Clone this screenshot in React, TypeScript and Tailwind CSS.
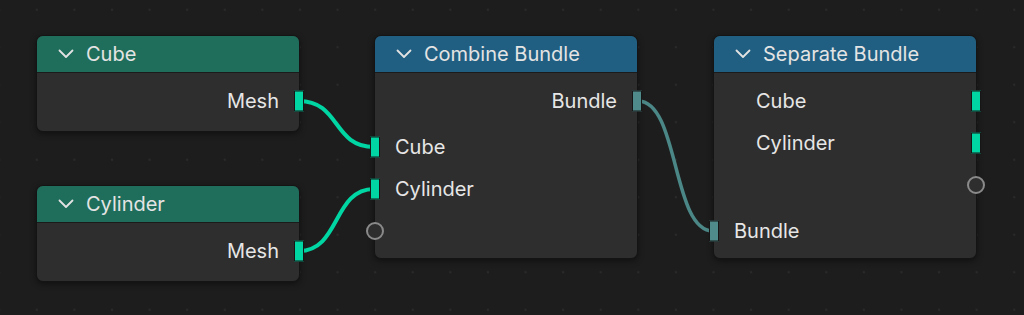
import React from 'react';

type Socket = 'geo' | 'bundle' | 'empty';

type Row = {
  label?: string;
  side: 'in' | 'out';
  socket: Socket;
  indent?: boolean;
  gapBefore?: boolean;
};

type NodeProps = {
  title: string;
  tone: 'green' | 'blue';
  left: string;
  top: string;
  rows: Row[];
  bottomPad: string;
};

const SocketShape: React.FC<{ kind: Socket; side: 'in' | 'out' }> = ({ kind, side }) => {
  const pos = side === 'out' ? '-right-[5px]' : '-left-[5px]';
  if (kind === 'empty') {
    const cpos = side === 'out' ? '-right-[9px]' : '-left-[9px]';
    return (
      <span
        className={`absolute ${cpos} top-1/2 -translate-y-1/2 w-[18px] h-[18px] rounded-full border-2 border-[#8a8a8a] bg-[#2e2e2e]`}
      />
    );
  }
  return (
    <span
      className={`absolute ${pos} top-1/2 -translate-y-1/2 w-[10px] h-[21px] border border-[#161616] ${
        kind === 'geo' ? 'bg-[#00d6a3]' : 'bg-[#4f8b8b]'
      }`}
    />
  );
};

const Chevron = () => (
  <svg width="16" height="10" viewBox="0 0 16 10" className="shrink-0">
    <polyline points="1.5,1.5 8,8 14.5,1.5" fill="none" stroke="#e2e2e2" strokeWidth="1.8" strokeLinecap="round" strokeLinejoin="round" />
  </svg>
);

const Node: React.FC<NodeProps> = ({ title, tone, left, top, rows, bottomPad }) => (
  <div
    className={`absolute ${left} ${top} w-[264px] rounded-[7px] border border-[#141414] bg-[#2e2e2e] shadow-[0_2px_6px_rgba(0,0,0,0.45)]`}
  >
    <div
      className={`flex items-center h-[37px] pl-[21px] gap-[12px] rounded-t-[6px] border-b border-[#1b1b1b] ${
        tone === 'green' ? 'bg-[#1f6e5c]' : 'bg-[#215f82]'
      }`}
    >
      <Chevron />
      <span className="text-[20px] text-[#e4e4e4] leading-none">{title}</span>
    </div>
    <div className={`flex flex-col pt-[7px] ${bottomPad}`}>
      {rows.map((r, i) => (
        <div
          key={i}
          className={`relative flex items-center h-[42px] ${r.gapBefore ? 'mt-[4px]' : ''} ${
            r.side === 'out' && !r.indent ? 'justify-end pr-[20px]' : r.indent ? 'pl-[42px]' : 'pl-[20px]'
          }`}
        >
          {r.label && <span className="text-[20px] text-[#e6e6e6] leading-none">{r.label}</span>}
          <SocketShape kind={r.socket} side={r.side} />
        </div>
      ))}
    </div>
  </div>
);

const wire = (x1: number, y1: number, x2: number, y2: number) => {
  const d = Math.max(Math.abs(x2 - x1) * 0.55, 30);
  return `M ${x1} ${y1} C ${x1 + d} ${y1}, ${x2 - d} ${y2}, ${x2} ${y2}`;
};

export default function App() {
  return (
    <div
      className="relative w-[1024px] h-[315px] overflow-hidden bg-[#1d1d1d] bg-[radial-gradient(circle,#2a2a2a_1px,transparent_1.6px)] bg-[size:37.6px_37.5px] bg-[position:18px_-9px]"
      style={{ fontFamily: 'Inter, "Noto Sans", sans-serif' }}
    >
      <svg width="1024" height="315" className="absolute inset-0">
        <path d={wire(299, 101, 374, 147)} fill="none" stroke="#00d6a3" strokeWidth="4" />
        <path d={wire(299, 251, 374, 189)} fill="none" stroke="#00d6a3" strokeWidth="4" />
        <path d={wire(638, 101, 713, 231)} fill="none" stroke="#4b8786" strokeWidth="3.5" />
      </svg>

      <Node
        title="Cube"
        tone="green"
        left="left-[36px]"
        top="top-[35px]"
        bottomPad="pb-[9px]"
        rows={[{ label: 'Mesh', side: 'out', socket: 'geo' }]}
      />
      <Node
        title="Cylinder"
        tone="green"
        left="left-[36px]"
        top="top-[185px]"
        bottomPad="pb-[9px]"
        rows={[{ label: 'Mesh', side: 'out', socket: 'geo' }]}
      />
      <Node
        title="Combine Bundle"
        tone="blue"
        left="left-[374px]"
        top="top-[35px]"
        bottomPad="pb-[6px]"
        rows={[
          { label: 'Bundle', side: 'out', socket: 'bundle' },
          { label: 'Cube', side: 'in', socket: 'geo', gapBefore: true },
          { label: 'Cylinder', side: 'in', socket: 'geo' },
          { side: 'in', socket: 'empty' },
        ]}
      />
      <Node
        title="Separate Bundle"
        tone="blue"
        left="left-[713px]"
        top="top-[35px]"
        bottomPad="pb-[6px]"
        rows={[
          { label: 'Cube', side: 'out', socket: 'geo', indent: true },
          { label: 'Cylinder', side: 'out', socket: 'geo', indent: true },
          { side: 'out', socket: 'empty' },
          { label: 'Bundle', side: 'in', socket: 'bundle', gapBefore: true },
        ]}
      />
    </div>
  );
}
